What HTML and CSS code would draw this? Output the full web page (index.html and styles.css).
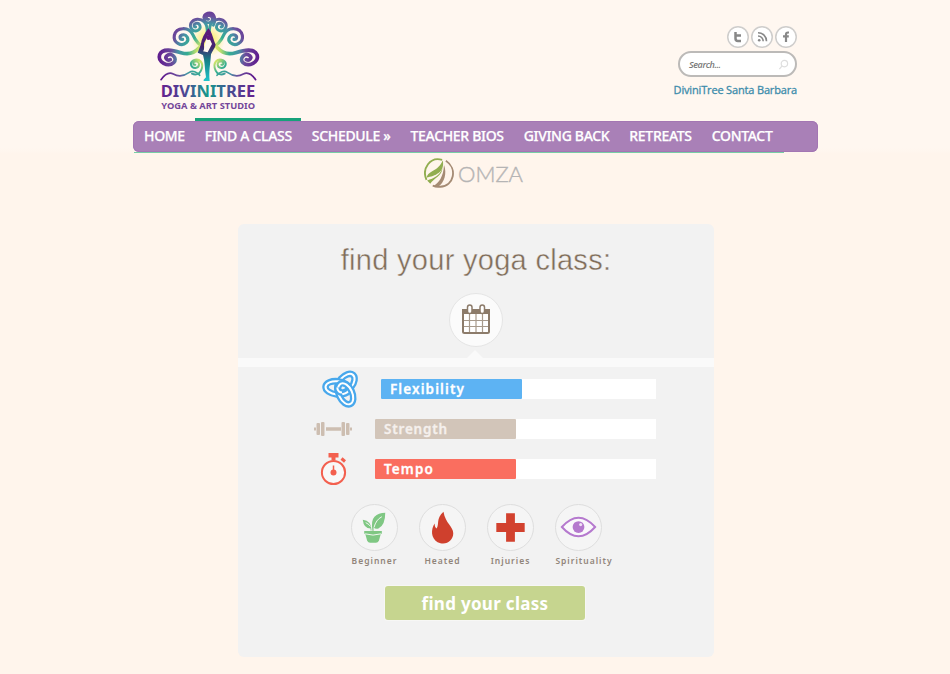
FILE: index.html
```html
<!DOCTYPE html>
<html lang="en">
<head>
<meta charset="utf-8">
<title>DiviniTree Yoga &amp; Art Studio</title>
<link rel="stylesheet" href="styles.css">
</head>
<body>
<header class="header">
  <svg class="logo" viewBox="0 0 375 330" role="img" aria-label="DiviniTree Yoga &amp; Art Studio">
    <defs>
      <radialGradient id="tree" gradientUnits="userSpaceOnUse" cx="190" cy="145" r="155">
        <stop offset="0" stop-color="#f4f04c"/><stop offset=".22" stop-color="#c9e36a"/>
        <stop offset=".4" stop-color="#35ad92"/><stop offset=".58" stop-color="#4593a4"/>
        <stop offset=".72" stop-color="#6b4c9c"/><stop offset="1" stop-color="#5e168c"/>
      </radialGradient>
      <radialGradient id="glow" gradientUnits="userSpaceOnUse" cx="190" cy="105" r="50">
        <stop offset="0" stop-color="#f6f04e"/><stop offset="1" stop-color="#f6f04e" stop-opacity="0"/>
      </radialGradient>
      <linearGradient id="body" x1="0" y1="0" x2="0" y2="1">
        <stop offset="0" stop-color="#61177f"/><stop offset=".35" stop-color="#43246f"/>
        <stop offset=".6" stop-color="#167f86"/><stop offset="1" stop-color="#20c4cb"/>
      </linearGradient>
      <linearGradient id="word" gradientUnits="userSpaceOnUse" x1="48" y1="0" x2="330" y2="0">
        <stop offset="0" stop-color="#66218e"/><stop offset=".25" stop-color="#4d4594"/>
        <stop offset=".5" stop-color="#159a8c"/><stop offset=".75" stop-color="#4a4a92"/>
        <stop offset="1" stop-color="#66218e"/>
      </linearGradient>
      <g id="branches">
        <path stroke-width="8.500" d="M152 66c-6 0-7-9 1-11c12-2 18 14 6 21c-14 7-28-8-21-22c8-14 28-15 40-3c8 9 10 20 8 34"/>
        <path stroke-width="9.500" d="M113 103c-9 1-11-10-2-13c13-4 24 12 13 23c-15 14-40-1-36-22c6-26 44-26 55-3c7 16 22 34 37 42"/>
        <path stroke-width="11" d="M76 164c-9 5-18-5-10-12c14-11 33 8 20 21c-17 15-49-2-42-24c8-21 40-13 64-6c26 8 43-2 54-14"/>
        <path stroke-width="6" d="M151 179c-8 2-8-10 2-10c13 1 12 19-2 20c-14 0-18-16-6-23c18-9 34 8 23 31c-5 11-16 14-27 9"/>
        <path stroke-width="5" d="M48 224c12-17 26-23 37-17c18 10 34 5 48-5c10-7 23-1 31 9"/>
      </g>
    </defs>
    <circle cx="190" cy="105" r="50" fill="url(#glow)"/>
    <g fill="none" stroke="url(#tree)" stroke-linecap="round">
      <use href="#branches"/>
      <use href="#branches" transform="matrix(-1 0 0 1 380 0)"/>
      <path stroke-width="8" d="M191 43c-9 2-9-10 0-11c13-1 15 17 2 21c-17 3-24-23-5-29c21-4 27 19 17 37"/>
    </g>
    <path fill="#fff8f1" d="M189 84L202 119L188 144L174 140Z"/>
    <path fill="url(#body)" fill-rule="evenodd" d="M190 70C178 86 170 100 167 120L158 143L174 150C180 169 179 192 183 217L176 224V228H194C191 198 196 178 198 148C202 138 210 129 212 119C204 103 203 84 190 70ZM189 91L201 117L188 142L174 139C182 130 172 118 181 107Z"/>
    <circle cx="191" cy="98" r="7" fill="#61177f"/>
    <text class="logo-name" x="47" y="277" textLength="284" lengthAdjust="spacingAndGlyphs">DIVINITREE</text>
    <text class="logo-tag" x="49" y="312" textLength="281" lengthAdjust="spacingAndGlyphs">YOGA &amp; ART STUDIO</text>
  </svg>
  <div class="tools">
    <div class="social">
      <a><svg viewBox="0 0 22 22"><path d="M8.500 6v6.500q0 2.500 2.500 2.500h3M8.500 9.500H14" fill="none" stroke="#888" stroke-width="2.500"/></svg></a>
      <a><svg viewBox="0 0 22 22"><g fill="none" stroke="#888" stroke-width="1.600"><path d="M7 6.700a8.500 8.500 0 0 1 8.500 8.500M7 10a5.200 5.200 0 0 1 5.200 5.200"/></g><circle cx="8.200" cy="14.200" r="1.300" fill="#888"/></svg></a>
      <a><svg viewBox="0 0 22 22"><path d="M14 6.500h-1q-2 0-2 2V16M8 10.300h5.800" fill="none" stroke="#888" stroke-width="2.200"/></svg></a>
    </div>
    <div class="search"><span>Search...</span><svg viewBox="0 0 12 12"><g fill="none" stroke="#dedede" stroke-width="1.300"><circle cx="7" cy="5" r="3.500"/><path d="M4.500 7.500 1.500 11"/></g></svg></div>
    <a class="place">DiviniTree Santa Barbara</a>
  </div>
</header>
<nav class="nav">
  <a>HOME</a><a class="active">FIND A CLASS</a><a>SCHEDULE »</a><a>TEACHER BIOS</a><a>GIVING BACK</a><a>RETREATS</a><a>CONTACT</a>
</nav>
<main>
  <div class="brand">
    <svg class="brand-mark" viewBox="0 0 96 96"><path d="M58 6C20-6-8 34 8 70" fill="none" stroke="#91ad50" stroke-width="6"/><path d="M9 62C12 40 46 44 60 7C68 46 34 58 9 62Z" fill="#91ad50"/><path d="M10 72C32 64 50 58 59 32C58 58 32 64 20 82Z" fill="#91ad50"/><path d="M70 9C108 34 96 90 52 92Q38 94 28 88" fill="none" stroke="#a58b74" stroke-width="6"/><path d="M28 90C48 80 62 60 64 22C74 48 66 78 44 93Z" fill="#a58b74"/></svg>
    <span>OMZA</span>
  </div>
  <section class="card">
    <div class="card-top">
      <h1>find your yoga class:</h1>
      <div class="calendar"><svg viewBox="0 0 28 30"><rect x="1" y="6" width="26" height="23" rx="1.500" fill="#fff" stroke="#8c7b6a" stroke-width="2"/><path d="M0 5h28v5H0z" fill="#8c7b6a"/><path d="M7.500 10v18M14 10v18M20.500 10v18M2 16.500h24M2 22.500h24" stroke="#a79a8c" stroke-width="1.200"/><g fill="#fff" stroke="#8c7b6a" stroke-width="1.500"><rect x="5.500" y="1" width="4.500" height="8.500" rx="2.250"/><rect x="18" y="1" width="4.500" height="8.500" rx="2.250"/></g></svg></div>
    </div>
    <div class="divider"></div>
    <div class="levels">
      <div class="level flex">
        <div class="level-icon"><svg class="knot" viewBox="0 0 108 112"><defs>
          <clipPath id="over"><path d="M34 50h26v34H34z"/></clipPath>
          <ellipse id="lobe-a" cx="72" cy="37" rx="33" ry="20" transform="rotate(-50 72 37)"/>
          <ellipse id="lobe-b" cx="46" cy="51" rx="36" ry="20" transform="rotate(6 46 51)"/>
          <ellipse id="lobe-c" cx="71" cy="69" rx="34" ry="20" transform="rotate(65 71 69)"/></defs>
          <g fill="none" stroke="#48a8ec" stroke-width="20"><use href="#lobe-a"/></g><g fill="none" stroke="#fff" stroke-width="6"><use href="#lobe-a"/></g>
          <g fill="none" stroke="#48a8ec" stroke-width="20"><use href="#lobe-b"/></g><g fill="none" stroke="#fff" stroke-width="6"><use href="#lobe-b"/></g>
          <g fill="none" stroke="#48a8ec" stroke-width="20"><use href="#lobe-c"/></g><g fill="none" stroke="#fff" stroke-width="6"><use href="#lobe-c"/></g>
          <g clip-path="url(#over)" fill="none"><use href="#lobe-a" stroke="#48a8ec" stroke-width="20"/><use href="#lobe-a" stroke="#fff" stroke-width="6"/></g>
        </svg></div>
        <div class="bar"><div class="fill">Flexibility</div></div>
      </div>
      <div class="level strength">
        <div class="level-icon"><svg class="dumbbell" viewBox="0 0 38 14"><g fill="#cdbeb1"><path d="M0 5.500h2v3H0zM12 5.200h15v3.600H12zM36 5.500h2v3h-2z"/><rect x="2.500" y="1" width="3.500" height="12" rx="1"/><rect x="7" y="0" width="3.500" height="14" rx="1"/><rect x="27.500" y="0" width="3.500" height="14" rx="1"/><rect x="32" y="1" width="3.500" height="12" rx="1"/></g></svg></div>
        <div class="bar"><div class="fill">Strength</div></div>
      </div>
      <div class="level tempo">
        <div class="level-icon"><svg class="watch" viewBox="0 0 28 34"><circle cx="13.500" cy="20.500" r="11.600" fill="#f8f8f8" stroke="#f3604f" stroke-width="2"/><path d="M8.500 1h10v4.500h-10zM11.500 5h4v3h-4z" fill="#f3604f"/><path d="m21.500 6.500 3.500 3" stroke="#f3604f" stroke-width="3"/><circle cx="13.500" cy="20.500" r="3" fill="#f3604f"/><path d="M13.500 13.500v7" stroke="#f3604f" stroke-width="1.500"/></svg></div>
        <div class="bar"><div class="fill">Tempo</div></div>
      </div>
    </div>
    <div class="traits">
      <div class="trait"><div class="ring"><svg viewBox="0 0 46 46"><g fill="#7fc783"><path d="M12.500 26.500h18v3h-1l-2 7q-1 2-3 2h-6q-2 0-3-2l-2-7h-1Z"/><path d="M21 27q-2-11 2-15q4-4 11-4q0 13-7 16q-3 1-5-1v4ZM20 26q0-10-9-11q1 9 8 9v2Z"/></g><path d="M13.500 29.500q8 2.500 16 0M22.500 23q2-8 8-11M14 18q4 2 5 4" fill="none" stroke="#f5f8f3" stroke-width="1"/></svg></div><span>Beginner</span></div>
      <div class="trait"><div class="ring"><svg viewBox="0 0 46 46"><path d="M24 7c-8 7-4 13-7 17q-2-1-2-5c-4 6-4 15 3 19c8 4 16-1 16-9c0-7-8-10-10-22Z" fill="#cf402d"/></svg></div><span>Heated</span></div>
      <div class="trait"><div class="ring"><svg viewBox="0 0 46 46"><path d="M18.500 8.500h9v10h10v9h-10v10h-9v-10h-10v-9h10Z" fill="#d2412e"/></svg></div><span>Injuries</span></div>
      <div class="trait"><div class="ring"><svg viewBox="0 0 46 46"><path d="M6 22.500Q23 3.500 40 22.500Q23 41.500 6 22.500Z" fill="#faf8fb" stroke="#b579ce" stroke-width="2"/><circle cx="23" cy="22.500" r="6" fill="#b579ce"/><circle cx="25.200" cy="20" r="1.600" fill="#f0e3f5"/></svg></div><span class="wide">Spirituality</span></div>
    </div>
    <button class="submit">find your class</button>
  </section>
</main>
</body>
</html>
```

FILE: styles.css
```css
* { box-sizing: border-box; }
body { margin: 0; height: 674px; overflow: hidden; background: linear-gradient(#fff7f0 0 148px, #fff5ec 154px); font-family: "Open Sans", "Noto Sans", sans-serif; }
svg { display: block; }

.header { width: 685px; height: 121px; margin-left: 133px; display: flex; justify-content: space-between; padding: 5px 21px 0 12px; }
.logo { width: 125px; height: 110px; }
.logo-name { font: 700 46px "Noto Sans", sans-serif; fill: url(#word); }
.logo-tag { font: 700 24px "Noto Sans", sans-serif; fill: #74469a; }

.tools { display: flex; flex-direction: column; align-items: flex-end; padding-top: 21px; }
.social { display: flex; gap: 2px; }
.social a { width: 22px; height: 22px; border-radius: 50%; background: #fff; box-shadow: 0 0 0 1.500px #cfcdcb inset; }
.search { width: 119px; height: 26px; margin-top: 3px; border: 2px solid #bcbab8; border-radius: 13px; background: #fff; display: flex; align-items: center; justify-content: space-between; padding: 0 6px 0 9px; font: italic 600 9px "Open Sans", sans-serif; letter-spacing: -.4px; color: #777; }
.search svg { width: 11px; height: 11px; }
.place { margin-top: 5px; font-size: 11px; line-height: 16px; letter-spacing: -.16px; color: #3d8cab; -webkit-text-stroke: .3px #3d8cab; white-space: nowrap; }

.nav { position: relative; width: 685px; height: 31px; margin-left: 133px; border-radius: 6px; background: #a980b7; box-shadow: inset 0 0 0 1px #a376b3; display: flex; padding-left: 1px; }
.nav::after { content: ""; position: absolute; left: 1px; bottom: -1px; width: 650px; height: 1px; background: #78cda6; }
.nav a { position: relative; padding: 0 10px; font: 500 14px/30px "Noto Sans", "Open Sans", sans-serif; letter-spacing: -.32px; color: #fff; -webkit-text-stroke: .25px #fff; white-space: nowrap; }
.nav .active::before { content: ""; position: absolute; left: 0; width: 106px; top: -3px; height: 3px; background: #18a27a; }

.brand { height: 72px; margin-left: 424px; padding-top: 6px; display: flex; gap: 4px; }
.brand-mark { width: 30px; height: 30px; }
.brand span { font: 300 22px/31px Lato, sans-serif; color: #b5b4b4; -webkit-text-stroke: .4px #b5b4b4; }

.card { width: 476px; height: 433px; margin-left: 238px; border-radius: 6px; background: #f2f2f2; }
.card-top { height: 134px; display: flex; flex-direction: column; align-items: center; }
h1 { margin: 17px 0 0; font: 400 29px/38px "Liberation Sans", sans-serif; letter-spacing: .3px; color: #806d59; -webkit-text-stroke: .4px #f2f2f2; white-space: nowrap; }
.calendar { width: 54px; height: 54px; margin-top: 14px; border: 1px solid #e5e5e5; border-radius: 50%; background: #fbfbfb; display: grid; place-items: center; }
.calendar svg { width: 28px; height: 30px; margin-top: -3px; }
.divider { position: relative; height: 9px; background: #fafafa; }
.divider::before { content: ""; position: absolute; left: 229px; top: -8px; border: solid transparent; border-width: 0 8px 8px; border-bottom-color: #fafafa; }

.levels { padding: 2px 58px 0 76px; }
.level { height: 40px; display: flex; align-items: center; }
.level-icon { width: 61px; display: flex; }
.knot { width: 36px; height: 37px; margin-left: 8px; overflow: visible; }
.dumbbell { width: 38px; height: 14px; }
.watch { width: 28px; height: 34px; margin-left: 6px; }
.bar { flex: 1; height: 20px; background: #fff; }
.flex .level-icon { width: 67px; }
.fill { width: 141px; height: 20px; padding-left: 9px; border-radius: 1px; font: 600 13.500px/20px "Noto Sans", sans-serif; letter-spacing: 1.100px; color: #fff; -webkit-text-stroke: .3px #fff; }
.flex .fill { background: #5db3f3; }
.strength .fill { background: #d2c5b9; color: #f5f0ed; -webkit-text-stroke-color: #f5f0ed; letter-spacing: .8px; }
.tempo .fill { background: #fa6e5f; }

.traits { display: flex; gap: 21px; padding: 15px 0 0 113px; }
.trait { width: 47px; display: flex; flex-direction: column; align-items: center; }
.ring { width: 47px; height: 47px; border: 1px solid #dedede; border-radius: 50%; background: #f5f5f5; }
.ring svg { width: 45px; height: 45px; }
.trait span { margin-top: 3px; font: 600 8.500px/14px "Noto Sans", sans-serif; letter-spacing: 1px; color: #91857a; white-space: nowrap; }
.trait .wide { margin-left: 11px; }
.submit { display: block; width: 200px; height: 34px; margin: 18px 0 0 147px; padding: 1px 0 0; border: 0; border-radius: 3px; background: #c6d58f; box-shadow: 0 0 0 1px #f7f7f5; color: #fff; font: 700 17px/34px "Noto Sans", sans-serif; letter-spacing: .3px; }
```
